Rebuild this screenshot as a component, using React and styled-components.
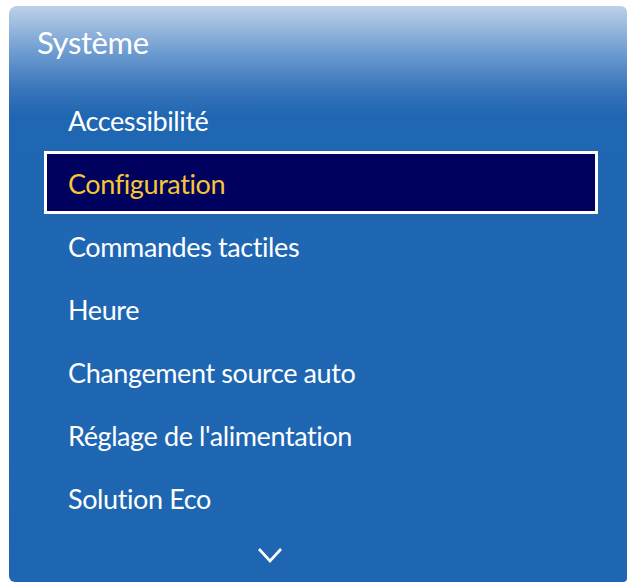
import React from 'react';
import styled, { createGlobalStyle } from 'styled-components';

const GlobalStyle = createGlobalStyle`
  html, body {
    margin: 0;
    padding: 0;
    background: #ffffff;
  }
  body {
    font-family: Lato, "Open Sans", sans-serif;
  }
`;

const Page = styled.div`
  width: 631px;
  height: 585px;
  padding: 6px 4px 3px 9px;
  box-sizing: border-box;
`;

const Panel = styled.div`
  height: 100%;
  border-radius: 8px 6px 4px 6px;
  background: linear-gradient(180deg, #bcd1e8 0px, #6f9dd1 45px, #3773ba 85px, #1f67b3 110px, #1e66b2 100%);
  display: flex;
  flex-direction: column;
`;

const Title = styled.h1`
  margin: 0;
  padding: 17px 0 0 28px;
  height: 64px;
  box-sizing: border-box;
  font-size: 31px;
  line-height: 38px;
  font-weight: 400;
  color: #ffffff;
  letter-spacing: -0.4px;
`;

const List = styled.ul`
  list-style: none;
  margin: 18px 0 0;
  padding: 0 29px 0 35px;
  display: flex;
  flex-direction: column;
`;

const Item = styled.li`
  height: 63px;
  box-sizing: border-box;
  display: flex;
  align-items: center;
  padding-left: ${p => (p.$active ? '21px' : '24px')};
  padding-top: 2px;
  font-size: 27px;
  color: ${p => (p.$active ? '#f6c636' : '#ffffff')};
  background: ${p => (p.$active ? '#00005f' : 'transparent')};
  border: ${p => (p.$active ? '3px solid #ffffff' : 'none')};
  letter-spacing: -0.4px;
`;

const More = styled.div`
  margin-top: auto;
  height: 35px;
  display: flex;
  justify-content: center;
  padding-right: 96px;
`;

const items = [
  'Accessibilité',
  'Configuration',
  'Commandes tactiles',
  'Heure',
  'Changement source auto',
  "Réglage de l'alimentation",
  'Solution Eco',
];

export default function App() {
  return (
    <>
      <GlobalStyle />
      <Page>
        <Panel>
          <Title>Système</Title>
          <List>
            {items.map(t => (
              <Item key={t} $active={t === 'Configuration'}>{t}</Item>
            ))}
          </List>
          <More>
            <svg width="26" height="17" viewBox="0 0 26 17">
              <path d="M2 2 L13 14 L24 2" fill="none" stroke="#ffffff" strokeWidth="2.6" />
            </svg>
          </More>
        </Panel>
      </Page>
    </>
  );
}
